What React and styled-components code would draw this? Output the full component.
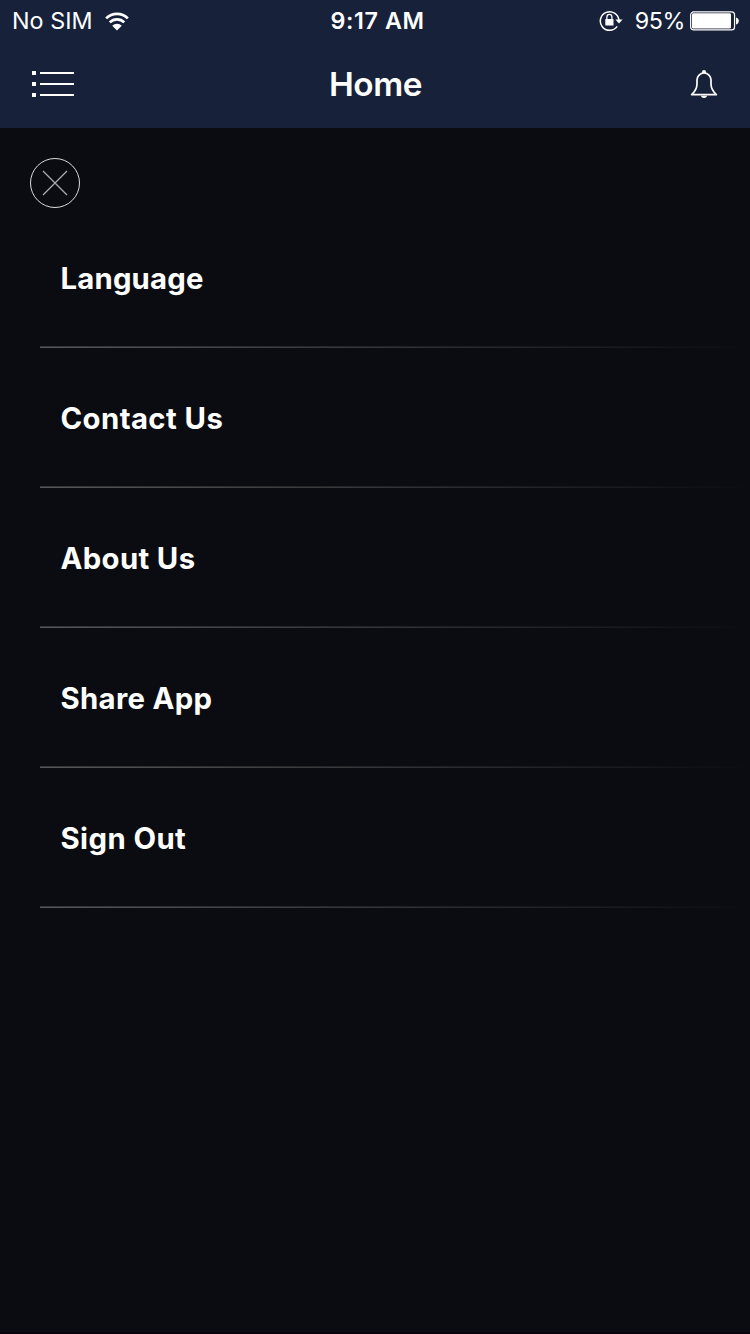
import React from 'react';
import styled, { createGlobalStyle } from 'styled-components';

const GlobalStyle = createGlobalStyle`
  *,
  *::before,
  *::after {
    box-sizing: border-box;
  }

  body {
    margin: 0;
    background: #0b0c11;
    font-family: 'Inter', 'Liberation Sans', sans-serif;
    color: #fff;
  }
`;

const Screen = styled.div`
  display: flex;
  flex-direction: column;
  width: 750px;
  height: 1334px;
  overflow: hidden;
  background: #0b0c11;
  border-bottom: 2px solid #0d0310;
`;

const Header = styled.header`
  height: 128px;
  background: #18213a;
`;

const StatusBar = styled.div`
  display: grid;
  grid-template-columns: 1fr auto 1fr;
  align-items: center;
  height: 40px;
  padding: 1px 11px 0 12px;
  font-size: 23.3px;
  line-height: 40px;
`;

const StatusGroup = styled.div`
  display: flex;
  align-items: center;
  justify-content: ${({ $end }) => ($end ? 'flex-end' : 'flex-start')};
`;

const Carrier = styled.span`
  margin-right: 12px;
  letter-spacing: 0.05px;
`;

const Clock = styled.span`
  font-weight: 600;
  letter-spacing: 0.6px;
  padding-left: 4px;
`;

const Percent = styled.span`
  margin: 0 5px 0 12px;
  letter-spacing: -0.4px;
`;

const NavBar = styled.nav`
  display: grid;
  grid-template-columns: 1fr auto 1fr;
  align-items: center;
  height: 88px;
  padding: 0 32px;
`;

const IconButton = styled.button`
  display: block;
  padding: 0;
  border: none;
  background: transparent;
  color: inherit;
  line-height: 0;
  cursor: pointer;
  justify-self: ${({ $end }) => ($end ? 'end' : 'start')};
`;

const Title = styled.h1`
  margin: 0;
  padding-left: 1px;
  font-size: 33.3px;
  font-weight: 600;
  line-height: 88px;
  letter-spacing: -0.4px;
`;

const CloseButton = styled(IconButton)`
  align-self: flex-start;
  margin: 29px 0 0 29px;
`;

const Menu = styled.ul`
  margin: 0;
  padding: 0 0 0 40px;
  list-style: none;
`;

const MenuItem = styled.li`
  display: flex;
  flex-direction: column;
  height: 140px;
  cursor: pointer;

  &::after {
    content: '';
    height: 2px;
    background: linear-gradient(rgba(11, 12, 17, 0.45) 1px, transparent 1px),
      linear-gradient(90deg, #58585a, #0b0c11);
  }
`;

const MenuLabel = styled.span`
  flex: 1;
  padding-left: 20.5px;
  font-size: 29.3px;
  font-weight: 650;
  line-height: 141px;
  height: 138px;
  letter-spacing: ${({ $spacing }) => $spacing}px;
`;

const WifiIcon = () => (
  <svg width="24" height="19" viewBox="0.500 0 25 20" fill="none" stroke="#fff" strokeWidth="2.9">
    <path d="M1.6 6.7a16.2 16.2 0 0 1 22.8 0" />
    <path d="M5.4 10.9a10.8 10.8 0 0 1 15.2 0" />
    <path d="M13 19.5 8 14.4a7 7 0 0 1 10 0z" fill="#fff" stroke="none" />
  </svg>
);

const RotationLockIcon = () => (
  <svg width="24" height="22" viewBox="0 0 24 22" fill="none" stroke="#fff">
    <path d="M18.2 16.4A9.3 9.3 0 1 1 19.9 10.2" strokeWidth="1.5" />
    <path d="M16.4 9.6h7.2l-3.6 4z" fill="#fff" stroke="none" />
    <rect x="6.3" y="9" width="8.2" height="6.6" rx="0.6" fill="#fff" stroke="none" />
    <path d="M7.9 9.4V6.9a2.5 2.5 0 0 1 5 0v2.5" strokeWidth="1.3" />
  </svg>
);

const BatteryIcon = () => (
  <svg width="49" height="20" viewBox="0 0 49 20" fill="none">
    <rect x="0.65" y="0.95" width="43.9" height="18" rx="3" stroke="#fff" strokeWidth="1.2" />
    <rect x="2" y="2.3" width="39" height="15.3" rx="1.4" fill="#fff" />
    <path d="M46 6.6c1.8.3 2.8 1.6 2.8 3.4s-1 3.1-2.8 3.4z" fill="#fff" />
  </svg>
);

const ListIcon = () => (
  <svg width="42" height="26" viewBox="0 0 42 26" fill="#fff">
    {[0, 11, 22].map(y => (
      <React.Fragment key={y}>
        <rect x="0" y={y} width="4" height="4" />
        <rect x="8" y={y + 1} width="34" height="2" />
      </React.Fragment>
    ))}
  </svg>
);

const BellIcon = () => (
  <svg width="28" height="28" viewBox="0 0 28 28" fill="none" stroke="#fff">
    <path
      d="M1.6 24.6C5 21.6 7 18.3 7 13.8V10a7 7 0 0 1 14 0v3.8c0 4.5 2 7.8 5.4 10.8z"
      strokeWidth="1.7"
      strokeLinejoin="round"
    />
    <path d="M12 3V2a2 2 0 0 1 4 0v1z" fill="#fff" stroke="none" />
    <path d="M11 25.8h6c-.2 1.4-1.4 2.2-3 2.2s-2.8-.8-3-2.2z" fill="#fff" stroke="none" />
  </svg>
);

const CloseIcon = () => (
  <svg width="51" height="51" viewBox="0 0 51 51" fill="none" stroke="#fff">
    <circle cx="26" cy="26" r="24.5" strokeWidth="1" strokeOpacity="0.85" />
    <path d="M14 14l24 24M38 14l-24 24" strokeWidth="1.3" strokeOpacity="0.65" />
  </svg>
);

const items = [
  { label: 'Language', spacing: 0.2 },
  { label: 'Contact Us', spacing: 0.42 },
  { label: 'About Us', spacing: 0.36 },
  { label: 'Share App', spacing: 0.34 },
  { label: 'Sign Out', spacing: 0.42 },
];

const App = () => (
  <>
    <GlobalStyle />
    <Screen>
      <Header>
        <StatusBar>
          <StatusGroup>
            <Carrier>No SIM</Carrier>
            <WifiIcon />
          </StatusGroup>
          <Clock>9:17 AM</Clock>
          <StatusGroup $end>
            <RotationLockIcon />
            <Percent>95%</Percent>
            <BatteryIcon />
          </StatusGroup>
        </StatusBar>
        <NavBar>
          <IconButton aria-label="Menu">
            <ListIcon />
          </IconButton>
          <Title>Home</Title>
          <IconButton $end aria-label="Notifications">
            <BellIcon />
          </IconButton>
        </NavBar>
      </Header>
      <CloseButton aria-label="Close">
        <CloseIcon />
      </CloseButton>
      <Menu>
        {items.map(({ label, spacing }) => (
          <MenuItem key={label}>
            <MenuLabel $spacing={spacing}>{label}</MenuLabel>
          </MenuItem>
        ))}
      </Menu>
    </Screen>
  </>
);

export default App;
